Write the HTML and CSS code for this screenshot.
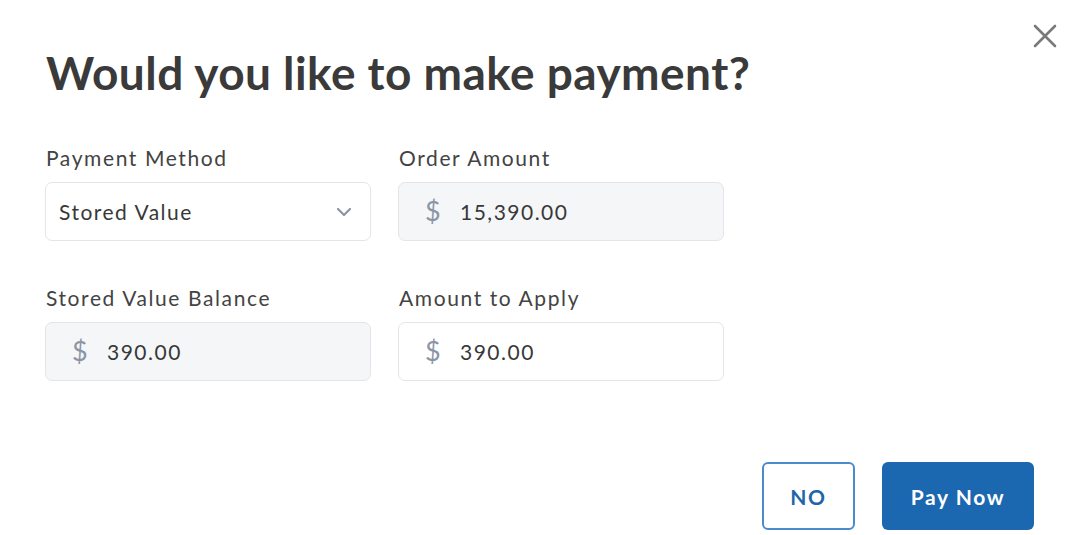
FILE: index.html
```html
<!DOCTYPE html>
<html lang="en">
<head>
<meta charset="utf-8">
<title>Make payment</title>
<link rel="stylesheet" href="styles.css">
</head>
<body>
<div class="dialog">
  <div class="header">
    <h1 class="title">Would you like to make payment?</h1>
    <button class="close" aria-label="Close">
      <svg width="24" height="24" viewBox="0 0 24 24"><path d="M2 2 L22 22 M22 2 L2 22" stroke="#7a7a7a" stroke-width="2.6" stroke-linecap="round" fill="none"/></svg>
    </button>
  </div>
  <div class="form">
    <div class="field">
      <div class="label">Payment Method</div>
      <div class="box select">
        <span class="value">Stored Value</span>
        <svg class="chev" width="16" height="10" viewBox="0 0 16 10"><path d="M2 2 L8 8 L14 2" stroke="#8c95a3" stroke-width="2.2" fill="none" stroke-linecap="round" stroke-linejoin="round"/></svg>
      </div>
    </div>
    <div class="field">
      <div class="label">Order Amount</div>
      <div class="box disabled">
        <span class="cur">$</span><span class="value">15,390.00</span>
      </div>
    </div>
    <div class="field">
      <div class="label">Stored Value Balance</div>
      <div class="box disabled">
        <span class="cur">$</span><span class="value">390.00</span>
      </div>
    </div>
    <div class="field">
      <div class="label">Amount to Apply</div>
      <div class="box">
        <span class="cur">$</span><span class="value">390.00</span>
      </div>
    </div>
  </div>
  <div class="footer">
    <button class="btn btn-outline">NO</button>
    <button class="btn btn-primary">Pay Now</button>
  </div>
</div>
</body>
</html>
```
FILE: styles.css
```css
html, body {
  margin: 0;
  padding: 0;
  background: #ffffff;
}
body {
  font-family: Lato, "Open Sans", sans-serif;
  color: #333;
}
.dialog {
  width: 1075px;
  height: 535px;
  box-sizing: border-box;
  padding: 0 41px 0 46px;
}
.header {
  display: flex;
  justify-content: space-between;
  align-items: flex-start;
}
.title {
  margin: 45px 0 0 0;
  font-size: 46px;
  line-height: 1.2;
  font-weight: 700;
  color: #3a3a3a;
  letter-spacing: 0.45px;
}
.close {
  margin: 24px -23px 0 0;
  padding: 0;
  border: none;
  background: none;
  width: 24px;
  height: 24px;
  display: block;
}
.close svg { display: block; }
.form {
  margin-top: 46px;
  display: grid;
  grid-template-columns: 326px 326px;
  column-gap: 27px;
  row-gap: 45px;
  margin-left: -1px;
}
.label {
  font-size: 21px;
  line-height: 24px;
  color: #434343;
  margin-left: 1px;
  margin-bottom: 12px;
  letter-spacing: 1.6px;
}
.box {
  height: 59px;
  box-sizing: border-box;
  border: 1px solid #e2e5ea;
  border-radius: 7px;
  display: flex;
  align-items: center;
  padding: 0 14px 0 26px;
  background: #fff;
}
.box.disabled {
  background: #f5f6f8;
}
.box.select {
  padding-left: 13px;
  justify-content: space-between;
  padding-right: 18px;
}
.value {
  font-size: 21px;
  color: #383838;
  letter-spacing: 1.5px;
}
.cur {
  font-size: 27px;
  color: #8b95a5;
  width: 35px;
  margin-top: -2px;
}
.chev { display: block; }
.footer {
  margin-top: 81px;
  display: flex;
  justify-content: flex-end;
  gap: 27px;
}
.btn {
  height: 68px;
  border-radius: 6px;
  font-family: Lato, "Open Sans", sans-serif;
  font-size: 21px;
  font-weight: 700;
  letter-spacing: 1.6px;
  box-sizing: border-box;
  cursor: pointer;
  padding: 0;
}
.btn-outline {
  width: 93px;
  background: #fff;
  border: 2px solid #4b8acb;
  color: #1f65ab;
}
.btn-primary {
  width: 152px;
  background: #1c68b0;
  border: none;
  color: #fff;
}
```
